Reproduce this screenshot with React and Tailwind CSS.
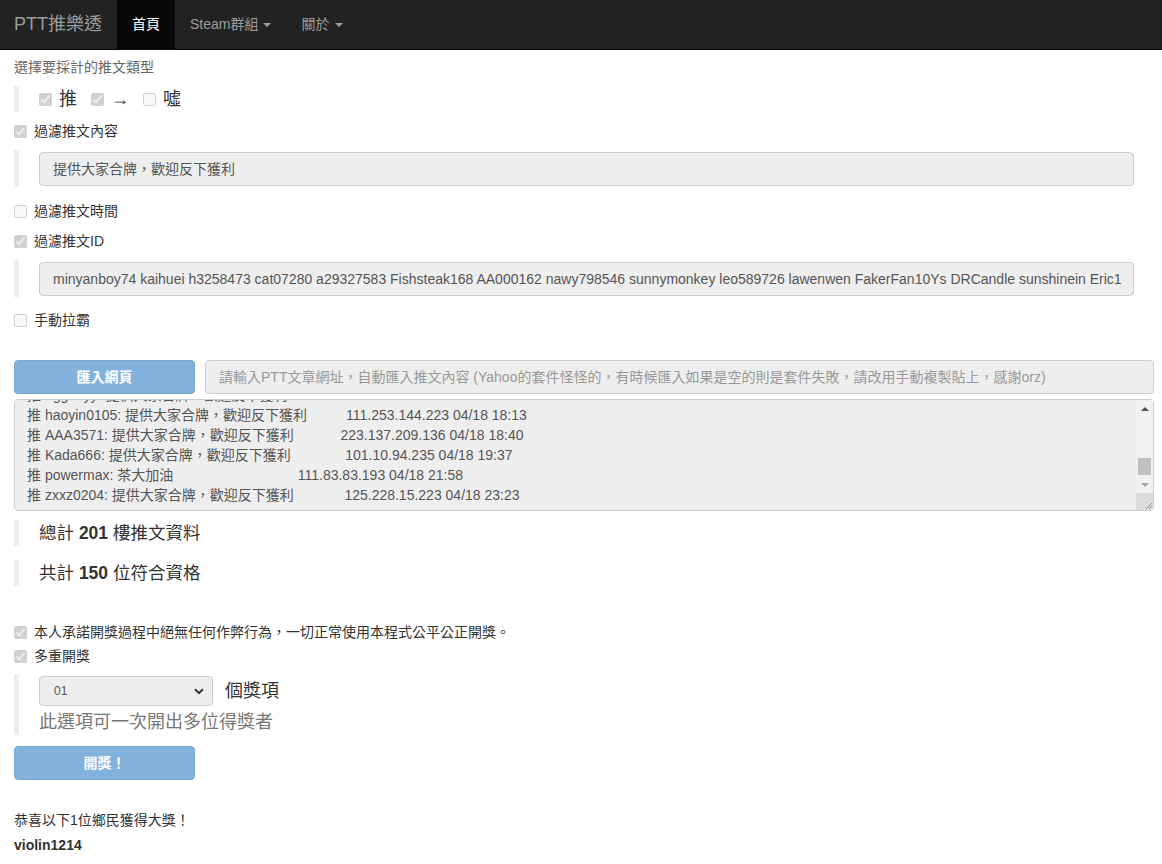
import { useEffect, useRef } from "react"

const font = "font-['Liberation_Sans','Noto_Sans_CJK_TC',sans-serif]"

const pad = (n) => " ".repeat(n)

const pushLines = [
  "推 hiroshi0923: 提供大家合牌，歡迎反下獲利" + pad(10) + "36.231.72.118 04/18 12:02",
  "推 tom80412: 提供大家合牌，歡迎反下獲利" + pad(12) + "114.34.120.56 04/18 12:10",
  "推 sunshinein: 提供大家合牌，歡迎反下獲利" + pad(11) + "1.160.33.201 04/18 12:41",
  "推 DRCandle: 提供大家合牌，歡迎反下獲利" + pad(12) + "61.224.5.87 04/18 13:05",
  "推 FakerFan10Ys: 提供大家合牌，歡迎反下獲利" + pad(8) + "123.193.66.10 04/18 13:22",
  "推 lawenwen: 提供大家合牌，歡迎反下獲利" + pad(12) + "101.12.40.77 04/18 13:48",
  "推 leo589726: 提供大家合牌，歡迎反下獲利" + pad(11) + "42.72.151.9 04/18 14:03",
  "推 sunnymonkey: 提供大家合牌，歡迎反下獲利" + pad(9) + "180.217.9.143 04/18 14:30",
  "推 nawy798546: 提供大家合牌，歡迎反下獲利" + pad(10) + "111.249.20.35 04/18 14:52",
  "推 AA000162: 提供大家合牌，歡迎反下獲利" + pad(12) + "27.52.101.64 04/18 15:11",
  "推 Fishsteak168: 提供大家合牌，歡迎反下獲利" + pad(9) + "39.12.88.203 04/18 15:37",
  "推 a29327583: 提供大家合牌，歡迎反下獲利" + pad(11) + "220.133.7.44 04/18 15:59",
  "推 cat07280: 提供大家合牌，歡迎反下獲利" + pad(12) + "114.45.201.12 04/18 16:20",
  "推 h3258473: 提供大家合牌，歡迎反下獲利" + pad(12) + "49.216.3.180 04/18 16:44",
  "推 kaihuei: 提供大家合牌，歡迎反下獲利" + pad(13) + "118.167.50.91 04/18 17:06",
  "推 minyanboy74: 提供大家合牌，歡迎反下獲利" + pad(10) + "36.225.14.222 04/18 17:25",
  "推 eggboyy: 提供大家合牌，歡迎反下獲利" + pad(13) + "223.140.2.15 04/18 17:58",
  "推 haoyin0105: 提供大家合牌，歡迎反下獲利" + pad(10) + "111.253.144.223 04/18 18:13",
  "推 AAA3571: 提供大家合牌，歡迎反下獲利" + pad(12) + "223.137.209.136 04/18 18:40",
  "推 Kada666: 提供大家合牌，歡迎反下獲利" + pad(14) + "101.10.94.235 04/18 19:37",
  "推 powermax: 茶大加油" + pad(32) + "111.83.83.193 04/18 21:58",
  "推 zxxz0204: 提供大家合牌，歡迎反下獲利" + pad(13) + "125.228.15.223 04/18 23:23",
]

function Check({ checked, label, big }) {
  return (
    <label className="flex items-center h-[20px]">
      <input type="checkbox" disabled checked={checked} readOnly className="w-[13px] h-[13px] m-0" />
      <span className={big ? "ml-[7px] min-w-[18px] text-[18px] text-[#333]" : "ml-[7px] text-[14px] text-[#333]"}>{label}</span>
    </label>
  )
}

function Quote({ children, className }) {
  return <div className={"border-l-[5px] border-[#eee] pl-[20px] " + className}>{children}</div>
}

// classic scrollbar drawn over the textarea (headless browser hides native ones)
function FakeScrollbar() {
  return (
    <div className="absolute right-[1px] top-[1px] bottom-[1px] w-[17px] flex flex-col bg-[#f1f1f1]">
      <div className="h-[17px] flex items-center justify-center">
        <span className="w-0 h-0 border-x-[4px] border-x-transparent border-b-[4px] border-b-[#505050]"></span>
      </div>
      <div className="flex-1 flex flex-col justify-end px-[2px]">
        <div className="h-[17px] bg-[#c1c1c1] mb-[1px]"></div>
      </div>
      <div className="h-[17px] flex items-center justify-center">
        <span className="w-0 h-0 border-x-[4px] border-x-transparent border-t-[4px] border-t-[#a3a3a3]"></span>
      </div>
      <div className="h-[17px] bg-[#dcdcdc] flex items-end justify-end">
        <svg width="10" height="10" viewBox="0 0 10 10">
          <path d="M9 3 L3 9 M9 6 L6 9" stroke="#888" strokeWidth="1" />
        </svg>
      </div>
    </div>
  )
}

export default function App() {
  const taRef = useRef(null)

  useEffect(() => {
    if (taRef.current) taRef.current.scrollTop = taRef.current.scrollHeight
  }, [])

  return (
    <div className={font + " bg-white text-[#333] text-[14px] min-h-[864px]"}>
      {/* navbar */}
      <nav className="h-[50px] bg-[#222] border-b border-[#080808] flex items-stretch">
        <div className="pl-[14px] pr-[15px] flex items-center text-[18px] text-[#9d9d9d]">PTT推樂透</div>
        <div className="bg-[#080808] text-white px-[15px] flex items-center">首頁</div>
        <div className="pl-[15px] pr-[15px] flex items-center text-[#9d9d9d]">
          Steam群組
          <span className="ml-[5px] inline-block w-0 h-0 border-x-[4px] border-x-transparent border-t-[4px] border-t-[#9d9d9d]"></span>
        </div>
        <div className="px-[15px] flex items-center text-[#9d9d9d]">
          關於
          <span className="ml-[6px] inline-block w-0 h-0 border-x-[4px] border-x-transparent border-t-[4px] border-t-[#9d9d9d]"></span>
        </div>
      </nav>

      <div className="px-[14px] pr-[8px] flex flex-col">
        <div className="mt-[7px] h-[20px] leading-[20px] text-[#666]">選擇要採計的推文類型</div>

        <Quote className="mt-[9px] h-[26px] flex items-center gap-[14px]">
          <Check checked label="推" big />
          <Check checked label="→" big />
          <Check checked={false} label="噓" big />
        </Quote>

        <div className="mt-[9px]"><Check checked label="過濾推文內容" /></div>

        <Quote className="mt-[9px] h-[37px] pt-[2px] pr-[20px]">
          <div className="h-[34px] bg-[#eee] border border-[#ccc] rounded-[4px] px-[13px] flex items-center text-[#555]">
            提供大家合牌，歡迎反下獲利
          </div>
        </Quote>

        <div className="mt-[14px]"><Check checked={false} label="過濾推文時間" /></div>
        <div className="mt-[10px]"><Check checked label="過濾推文ID" /></div>

        <Quote className="mt-[9px] h-[37px] pt-[2px] pr-[20px]">
          <div className="h-[34px] bg-[#eee] border border-[#ccc] rounded-[4px] px-[13px] flex items-center text-[#555] overflow-hidden whitespace-nowrap">
            minyanboy74 kaihuei h3258473 cat07280 a29327583 Fishsteak168 AA000162 nawy798546 sunnymonkey leo589726 lawenwen FakerFan10Ys DRCandle sunshinein Eric1
          </div>
        </Quote>

        <div className="mt-[13px]"><Check checked={false} label="手動拉霸" /></div>

        <div className="mt-[30px] flex gap-[10px] h-[34px]">
          <button disabled className="w-[181px] h-[34px] bg-[#82b1db] border border-[#7aa8d2] rounded-[4px] text-white font-bold">
            匯入網頁
          </button>
          <div className="flex-1 h-[34px] bg-[#eee] border border-[#ccc] rounded-[4px] px-[13px] flex items-center text-[#999] whitespace-nowrap overflow-hidden">
            請輸入PTT文章網址，自動匯入推文內容 (Yahoo的套件怪怪的，有時候匯入如果是空的則是套件失敗，請改用手動複製貼上，感謝orz)
          </div>
        </div>

        <div className="relative mt-[5px] w-[1140px] h-[112px]">
          <textarea
            ref={taRef}
            readOnly
            defaultValue={pushLines.join("\n")}
            className={font + " block w-full h-full resize-none bg-[#eee] border border-[#ccc] rounded-[4px] pl-[12px] pr-[20px] py-[5px] text-[14px] leading-[20px] text-[#555] whitespace-pre overflow-y-scroll overflow-x-hidden outline-none"}
          />
          <FakeScrollbar />
        </div>

        <Quote className="mt-[9px] h-[26px] flex items-center text-[17.5px]">
          <span>總計 <b>201</b> 樓推文資料</span>
        </Quote>
        <Quote className="mt-[14px] h-[26px] flex items-center text-[17.5px]">
          <span>共計 <b>150</b> 位符合資格</span>
        </Quote>

        <div className="mt-[36px]"><Check checked label="本人承諾開獎過程中絕無任何作弊行為，一切正常使用本程式公平公正開獎。" /></div>
        <div className="mt-[4px]"><Check checked label="多重開獎" /></div>

        <Quote className="mt-[8px] h-[61px] pt-[2px]">
          <div className="flex items-center">
            <div className="relative w-[174px] h-[30px] bg-[#eee] border border-[#ccc] rounded-[4px] flex items-center pl-[14px] text-[12px] text-[#555]">
              01
              <svg className="absolute right-[8px] top-[11px]" width="10" height="7" viewBox="0 0 10 7">
                <path d="M1 1.2 L5 5.2 L9 1.2" fill="none" stroke="#333" strokeWidth="2" />
              </svg>
            </div>
            <span className="ml-[12px] text-[18px]">個獎項</span>
          </div>
          <div className="mt-[4px] text-[18px] text-[#777] leading-[24px]">此選項可一次開出多位得獎者</div>
        </Quote>

        <button disabled className="mt-[11px] w-[181px] h-[34px] bg-[#82b1db] border border-[#7aa8d2] rounded-[4px] text-white font-bold">
          開獎！
        </button>

        <div className="mt-[30px] h-[20px] leading-[20px]">恭喜以下1位鄉民獲得大獎！</div>
        <div className="mt-[5px] h-[20px] leading-[20px] font-bold">violin1214</div>
      </div>
    </div>
  )
}
